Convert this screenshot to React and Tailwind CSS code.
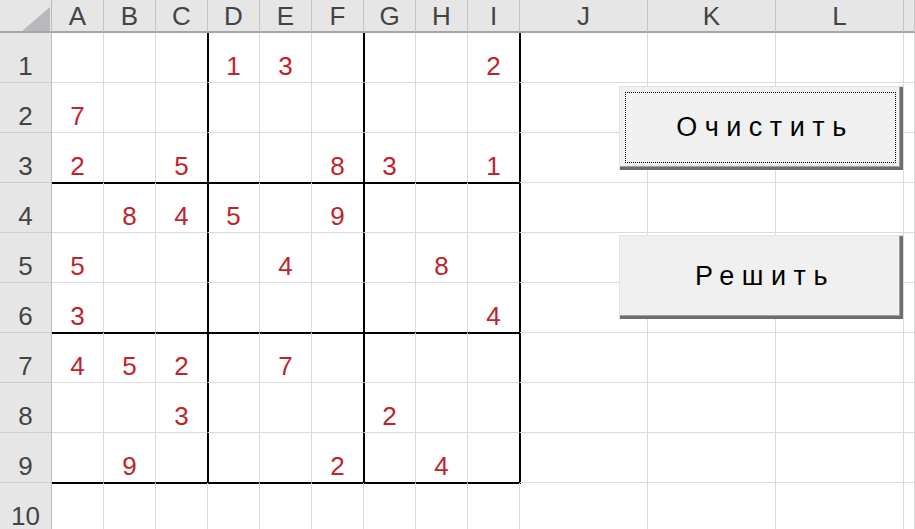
import React from "react";

const COLS = ["A", "B", "C", "D", "E", "F", "G", "H", "I", "J", "K", "L", ""];
const DATA = {
  1: { D: 1, E: 3, I: 2 },
  2: { A: 7 },
  3: { A: 2, C: 5, F: 8, G: 3, I: 1 },
  4: { B: 8, C: 4, D: 5, F: 9 },
  5: { A: 5, E: 4, H: 8 },
  6: { A: 3, I: 4 },
  7: { A: 4, B: 5, C: 2, E: 7 },
  8: { C: 3, G: 2 },
  9: { B: 9, F: 2, H: 4 },
};

function Cell({ row, col, ci }) {
  const thickRight = (ci === 2 || ci === 5 || ci === 8) && row <= 9;
  const thickBottom = (row === 3 || row === 6 || row === 9) && ci <= 8;
  const v = DATA[row] && DATA[row][col];
  let edge;
  if (thickRight && thickBottom) {
    edge = "border-r border-r-black border-b border-b-black shadow-[1px_0_0_#000,0_1px_0_#000,1px_1px_0_#000]";
  } else if (thickRight) {
    edge = "border-r border-r-black border-b border-b-[#dadada] shadow-[1px_0_0_#000]";
  } else if (thickBottom) {
    edge = "border-r border-r-[#dadada] border-b border-b-black shadow-[0_1px_0_#000]";
  } else {
    edge = "border-r border-r-[#dadada] border-b border-b-[#dadada]";
  }
  return (
    <div className={"flex items-end justify-center pb-[3px] " + edge}>
      {v !== undefined && (
        <span className="text-[26px] leading-none text-[#c0232b]">{v}</span>
      )}
    </div>
  );
}

function Btn({ top, label, focused }) {
  return (
    <div
      className="absolute left-[619px] w-[284px] h-[84px] bg-[#f0f0f0] border-t border-l border-t-[#e3e3e3] border-l-[#e3e3e3] shadow-[inset_-3px_-3px_0_#6d6d6d,inset_-4px_-4px_0_#a0a0a0] flex items-center justify-center"
      style={{ top }}
    >
      {focused && (
        <div className="absolute left-[5px] top-[5px] right-[7px] bottom-[7px] border border-dotted border-black" />
      )}
      <span className="text-[27px] leading-none tracking-[7.5px] text-black pl-[7px] pb-[2px]">
        {label}
      </span>
    </div>
  );
}

export default function App() {
  const rows = [];
  for (let r = 1; r <= 10; r++) {
    rows.push(
      <div
        key={"rh" + r}
        className="flex items-end justify-center pb-[3px] bg-[#e6e6e6] border-r border-r-[#bdbdbd] border-b border-b-[#cfcfcf] text-[#444] text-[26px] leading-none"
      >
        {r}
      </div>
    );
    COLS.forEach((c, ci) => {
      rows.push(<Cell key={r + "-" + ci} row={r} col={c} ci={ci} />);
    });
  }
  return (
    <div
      className="relative w-[915px] h-[529px] overflow-hidden bg-white"
      style={{ fontFamily: '"Liberation Sans", Arial, sans-serif' }}
    >
      <div className="grid grid-cols-[52px_repeat(9,52px)_128px_128px_128px_1fr] grid-rows-[33px_repeat(10,50px)]">
        <div className="relative bg-[#e6e6e6] border-r border-r-[#bdbdbd] border-b-2 border-b-[#a6a6a6]">
          <svg className="absolute left-[22px] top-[7px]" width="28" height="24" viewBox="0 0 28 24">
            <polygon points="28,0 28,24 0,24" fill="#b7b9bc" />
          </svg>
        </div>
        {COLS.map((c, i) => (
          <div
            key={"ch" + i}
            className="flex items-center justify-center bg-[#e6e6e6] border-r border-r-[#c6c6c6] border-b-2 border-b-[#a6a6a6] text-[#444] text-[26px] leading-none"
          >
            {c}
          </div>
        ))}
        {rows}
      </div>
      <Btn top={86} label="Очистить" focused />
      <Btn top={235} label="Решить" />
    </div>
  );
}
